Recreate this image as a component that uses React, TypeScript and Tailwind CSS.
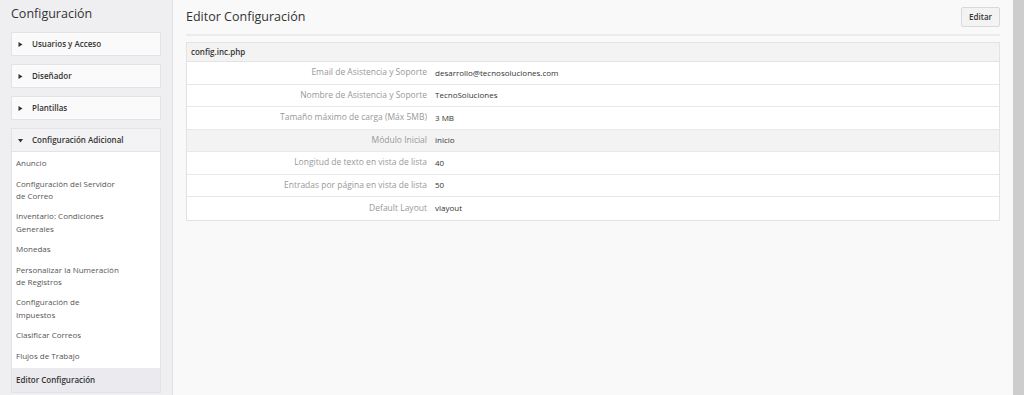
import React from "react";

const rows: { label: string; value: string; shaded?: boolean }[] = [
  { label: "Email de Asistencia y Soporte", value: "desarrollo@tecnosoluciones.com" },
  { label: "Nombre de Asistencia y Soporte", value: "TecnoSoluciones" },
  { label: "Tamaño máximo de carga (Máx 5MB)", value: "3 MB" },
  { label: "Módulo Inicial", value: "inicio", shaded: true },
  { label: "Longitud de texto en vista de lista", value: "40" },
  { label: "Entradas por página en vista de lista", value: "50" },
  { label: "Default Layout", value: "vlayout" },
];

const items: { node: React.ReactNode; two?: boolean }[] = [
  { node: "Anuncio" },
  { node: <>Configuración del Servidor<br />de Correo</>, two: true },
  { node: <>Inventario: Condiciones<br />Generales</>, two: true },
  { node: "Monedas" },
  { node: <>Personalizar la Numeración<br />de Registros</>, two: true },
  { node: <>Configuración de<br />Impuestos</>, two: true },
  { node: "Clasificar Correos" },
  { node: "Flujos de Trabajo" },
];

function Arrow({ down }: { down?: boolean }) {
  return (
    <svg width="5" height="5" viewBox="0 0 5 5" className="shrink-0">
      {down ? <polygon points="0,1 5,1 2.5,4.5" fill="#333" /> : <polygon points="0.5,0 4.5,2.5 0.5,5" fill="#333" />}
    </svg>
  );
}

function Panel({ title }: { title: string }) {
  return (
    <div className="mt-2 flex h-[24px] items-center gap-[9px] border border-[#e3e3e6] bg-[#fafafa] pl-[6px] text-[8px] font-semibold text-[#333]">
      <Arrow />
      <span>{title}</span>
    </div>
  );
}

export default function App() {
  return (
    <div className="flex h-[395px] w-[1024px] overflow-hidden font-['Open_Sans',sans-serif]">
      <aside className="w-[173px] shrink-0 border-r border-[#e2e2e6] bg-[#efeff2] pl-[11px] pr-[11px]">
        <h1 className="pt-[4px] text-[12.5px] leading-[20px] text-[#333]">Configuración</h1>
        <div>
          <Panel title="Usuarios y Acceso" />
          <Panel title="Diseñador" />
          <Panel title="Plantillas" />
        </div>
        <div className="mt-2 border border-[#e3e3e6] bg-white">
          <div className="flex h-[23px] items-center gap-[9px] border-b border-[#e3e3e6] bg-[#f3f3f5] pl-[6px] text-[8px] font-semibold text-[#333]">
            <Arrow down />
            <span>Configuración Adicional</span>
          </div>
          <ul className="pt-[1px] text-[8px] leading-[12.5px] text-[#555]">
            {items.map((it, i) => (
              <li key={i} className={`px-[4px] ${it.two ? "py-[3.75px]" : "py-[4.25px]"}`}>
                {it.node}
              </li>
            ))}
            <li className="mt-[1px] bg-[#ebebef] px-[4px] py-[5.75px] font-semibold text-[#333]">Editor Configuración</li>
          </ul>
        </div>
      </aside>
      <main className="flex-1 bg-[#f9f9f9] pl-[13px] pr-[13px]">
        <div className="flex h-[36px] items-center justify-between border-b-2 border-[#ececec]">
          <h2 className="text-[12.5px] text-[#333]">Editor Configuración</h2>
          <button className="h-[20px] rounded-[2px] border border-[#d9d9d9] bg-[#f3f3f3] px-[7px] text-[8px] font-semibold text-[#333]">
            Editar
          </button>
        </div>
        <div className="mt-[6px] border border-[#e3e3e3] bg-white">
          <div className="flex h-[19px] items-center border-b border-[#e3e3e3] bg-[#f3f3f3] pl-[4px] text-[8px] font-semibold text-[#333]">
            config.inc.php
          </div>
          {rows.map((r, i) => (
            <div
              key={i}
              className={`flex h-[22.5px] items-center ${i < rows.length - 1 ? "border-b border-[#e8e8e8]" : ""} ${r.shaded ? "bg-[#f3f3f3]" : ""}`}
            >
              <div className="w-[248px] pr-[8px] text-right text-[8.5px] text-[#999]">{r.label}</div>
              <div className="text-[8px] text-[#333]">{r.value}</div>
            </div>
          ))}
        </div>
      </main>
      <div className="w-[11px] shrink-0 bg-[#cdcdcd]" />
    </div>
  );
}
